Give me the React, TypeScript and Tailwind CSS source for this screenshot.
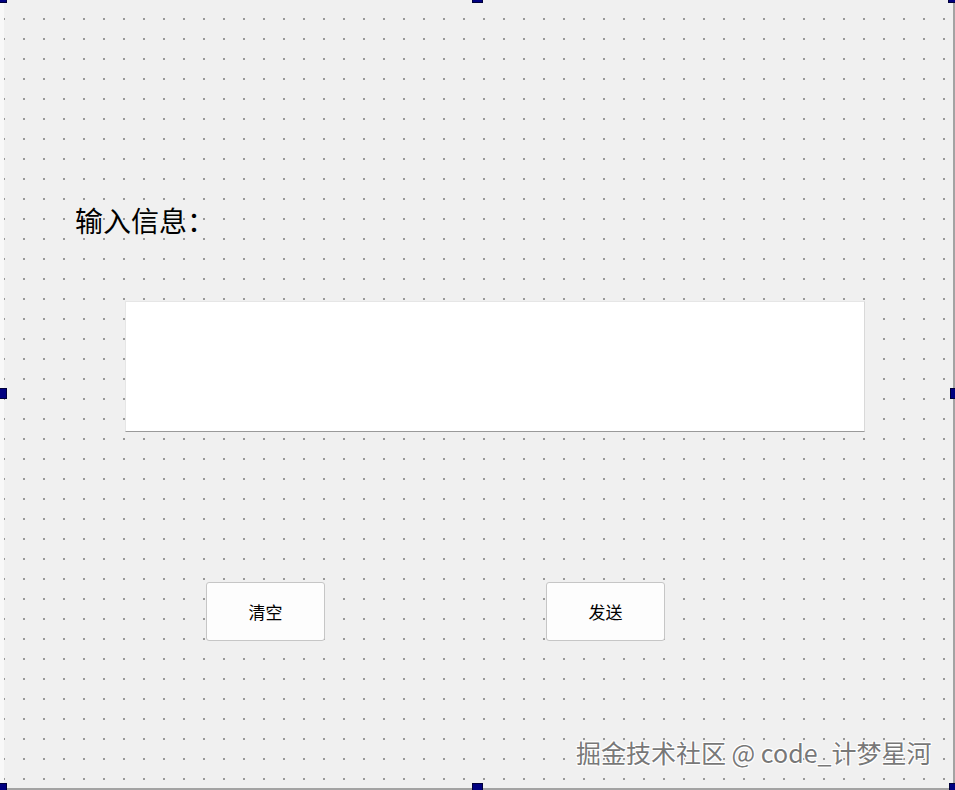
const cjk = "font-['Noto_Sans_CJK_SC','Noto_Sans',sans-serif]";

function Handle({ className }: { className: string }) {
  return <div className={`absolute w-[11px] h-[11px] bg-[#000080] border border-[#00003a] ${className}`} />;
}

function FormButton({ label }: { label: string }) {
  return (
    <button className="w-[119px] h-[59px] rounded-[3px] border border-[#c6c6c6] bg-[#fdfdfd] text-[17px] text-black">
      {label}
    </button>
  );
}

export default function App() {
  return (
    <div className={`relative w-[955px] h-[790px] overflow-hidden bg-[#f8f8f8] ${cjk}`}>
      {/* designer form with dot grid */}
      <div className="ml-[4px] w-[951px] h-[790px] border-r-2 border-b-2 border-[#a3a3a3] bg-[#f0f0f0] bg-[radial-gradient(circle_at_1px_1px,#999999_0.8px,transparent_1.1px)] bg-size-[20px_20px] bg-position-[-1px_18px] flex flex-col">
        <div className="ml-[71px] mt-[206px] text-[28px] leading-[28px] text-black">输入信息：</div>

        <div className="ml-[121px] mt-[67px] w-[740px] h-[131px] bg-white border border-[#e6e6e6] border-r-[#d9d9d9] border-b-[#9a9a9a]" />

        <div className="ml-[202px] mt-[150px] flex gap-[221px]">
          <FormButton label="清空" />
          <FormButton label="发送" />
        </div>
      </div>

      {/* watermark */}
      <div className="absolute left-[576px] top-[735px] text-[25px] leading-[34px] text-[#787878] whitespace-nowrap [text-shadow:1px_1px_0_#fff,-1px_-1px_0_#fff,1px_-1px_0_#fff,-1px_1px_0_#fff]">
        掘金技术社区 @ code_计梦星河
      </div>

      {/* selection handles */}
      <Handle className="left-[-4px] top-[-8px]" />
      <Handle className="left-[472px] top-[-8px]" />
      <Handle className="left-[948px] top-[-8px]" />
      <Handle className="left-[-4px] top-[388px]" />
      <Handle className="left-[950px] top-[388px]" />
      <Handle className="left-[-4px] top-[783px]" />
      <Handle className="left-[472px] top-[783px]" />
      <Handle className="left-[949px] top-[783px]" />
    </div>
  );
}
